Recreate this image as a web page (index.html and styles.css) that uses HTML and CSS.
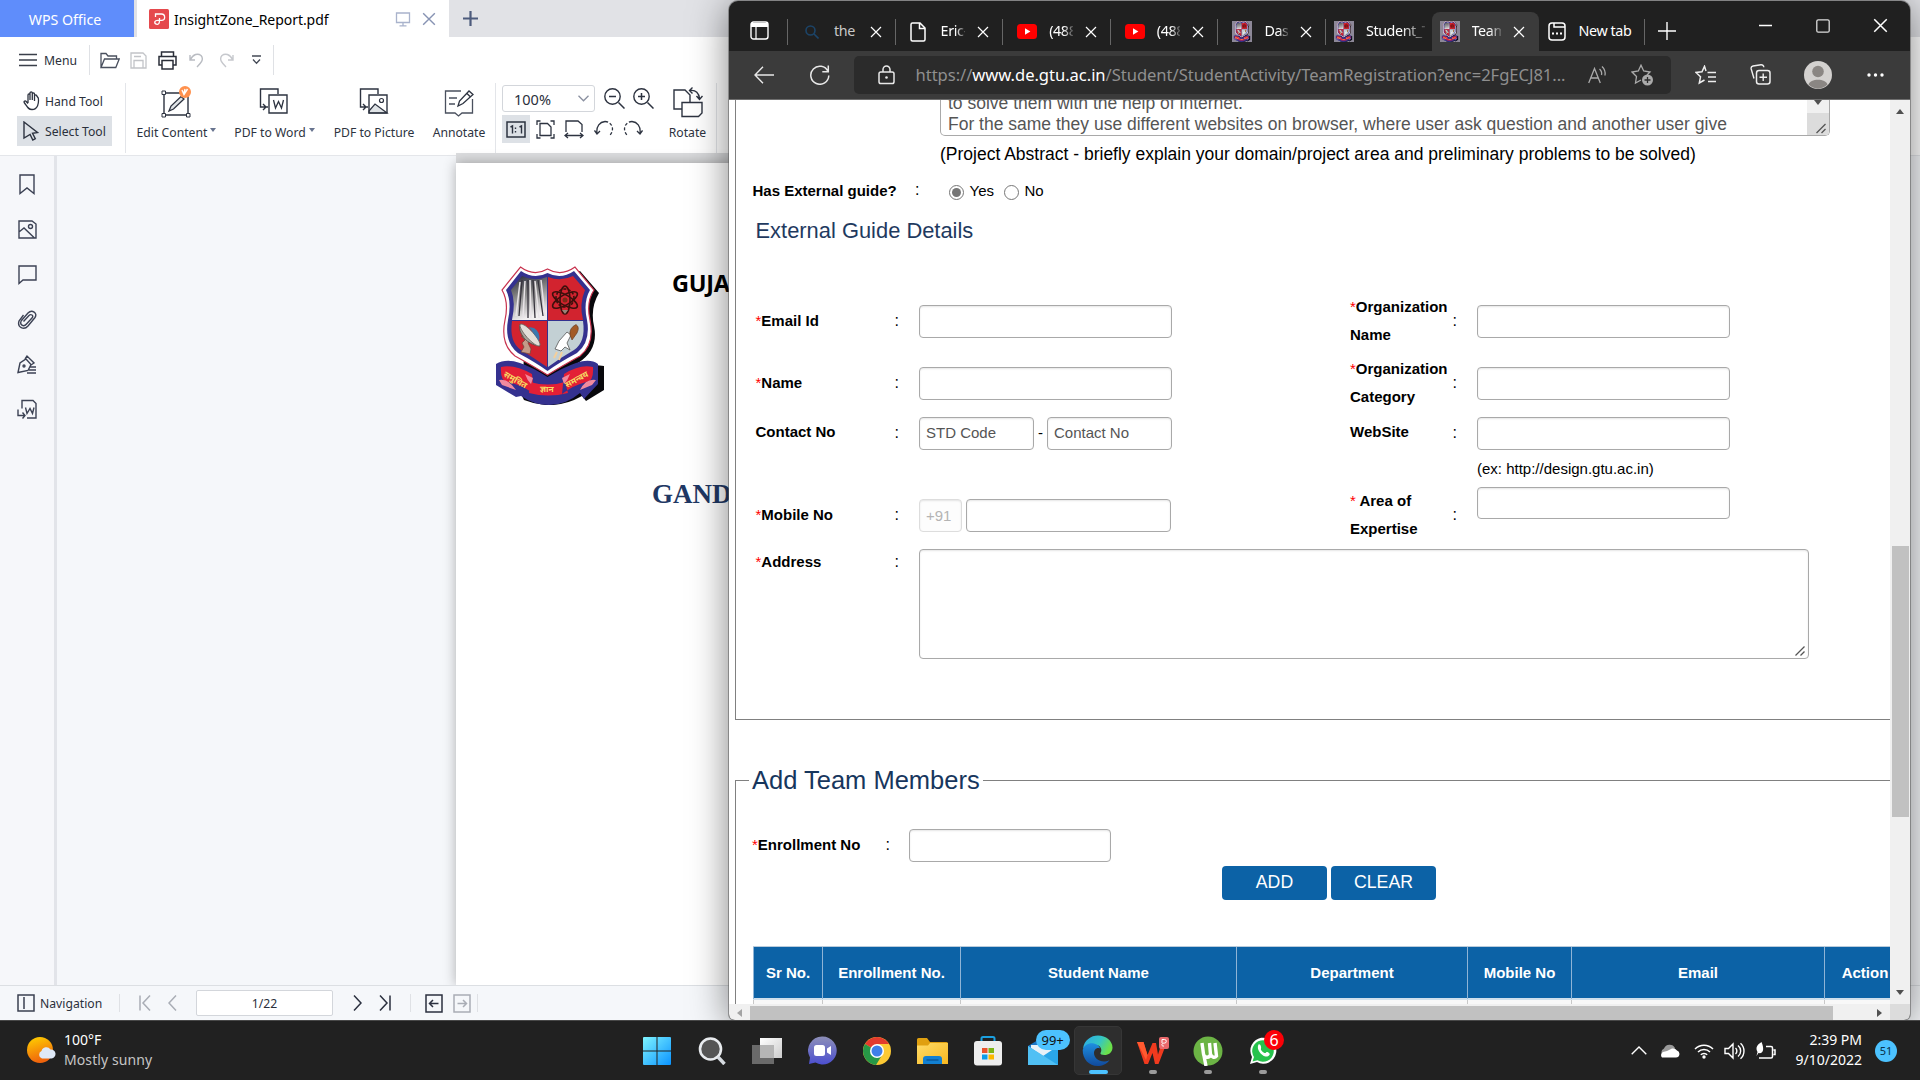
FILE: index.html
```html
<!DOCTYPE html>
<html lang="en">
<head>
<meta charset="utf-8">
<title>Team Registration</title>
<link rel="stylesheet" href="styles.css">
</head>
<body>
<svg class="defs" aria-hidden="true">
  <defs>
    <linearGradient id="win" x1="0" y1="0" x2="1" y2="1"><stop offset="0" stop-color="#7ff4ff"/><stop offset="1" stop-color="#0a93ff"/></linearGradient>
    <linearGradient id="sun" x1="0" y1="0" x2=".3" y2="1"><stop offset="0" stop-color="#ffd400"/><stop offset="1" stop-color="#f0640c"/></linearGradient>
    <linearGradient id="edgeG" x1="0" y1="0" x2="1" y2=".4"><stop offset="0" stop-color="#2aa8e8"/><stop offset=".6" stop-color="#35c6c4"/><stop offset="1" stop-color="#6be04a"/></linearGradient>
    <linearGradient id="edgeB" x1="0" y1="0" x2="0" y2="1"><stop offset="0" stop-color="#1e8fe0"/><stop offset="1" stop-color="#114a9c"/></linearGradient>
    <linearGradient id="chat" x1="0" y1="0" x2="0" y2="1"><stop offset="0" stop-color="#8d8fb8"/><stop offset="1" stop-color="#4c4fd0"/></linearGradient>
    <linearGradient id="fold" x1="0" y1="0" x2="1" y2="1"><stop offset="0" stop-color="#ffdc68"/><stop offset="1" stop-color="#f8b820"/></linearGradient>
    <linearGradient id="dam" x1="0" y1="0" x2=".3" y2="1"><stop offset="0" stop-color="#23253a"/><stop offset=".4" stop-color="#777"/><stop offset="1" stop-color="#f2eff0"/></linearGradient>
    <linearGradient id="task" x1="0" y1="0" x2="1" y2="1"><stop offset="0" stop-color="#fff"/><stop offset="1" stop-color="#ccc"/></linearGradient>
    <symbol id="crest" viewBox="0 0 108 139">
      <path d="M32 7Q42 12 54 7Q68 12 84 5L103 27Q94 42 98 60Q103 84 82 97L108 100V124L90 135L86 130Q58 146 28 134L26 130Z" fill="#08080c"/>
      <path d="M24.5 1Q38 11 51.5 3Q65 11 79 1L98 24Q90 36 94 54Q99 78 84 90Q66 100 51.5 109Q37 100 19 90Q4 78 9 54Q13 36 6 24Z" fill="#fff" stroke="#c8324e" stroke-width="1.2"/>
      <path d="M25 5Q38 14 51.5 7Q65 14 78 5L94 24Q87 36 91 54Q95 76 81 87Q64 96 51.5 105Q39 96 22 87Q8 76 12 54Q16 36 10 24Z" fill="#34318f"/>
      <path d="M26 10Q38 16 51 11V54H16Q20 36 15 24Z" fill="url(#dam)"/>
      <path d="M52 11Q65 16 77 10L89 24Q83 38 87 54H52Z" fill="#d2232f"/>
      <path d="M16 55H51V101Q38 92 25 84Q13 76 16 55Z" fill="#d2232f"/>
      <path d="M52 55H87Q90 76 78 84Q64 92 52 101Z" fill="#c3d0d4"/>
      <path d="M24 16L20 50M29 15L27 52M34 14L35 52M39 15L43 52M45 14L49 50" stroke="#e9e4e8" stroke-width="1.5" fill="none"/>
      <path d="M26 14L23 50M32 14L32 52M37 14L39 52M42 14L47 50" stroke="#37333d" stroke-width="1.3" fill="none"/>
      <g fill="none" stroke="#3d100c" stroke-width="1.6"><ellipse cx="69" cy="34" rx="14" ry="5" transform="rotate(30 69 34)"/><ellipse cx="69" cy="34" rx="14" ry="5" transform="rotate(-30 69 34)"/><ellipse cx="69" cy="34" rx="5" ry="14"/><circle cx="69" cy="32" r="9" stroke-dasharray="3 1.5"/></g>
      <circle cx="69" cy="34" r="2.5" fill="#7a2a18"/><path d="M66 44h6l-3 4z" fill="#968478"/>
      <path d="M25 70l4 4-3 3 2 4-3 5 9 2 1-5-3-6 2-4z" fill="#c49a88" stroke="#6e4438" stroke-width=".7"/>
      <path d="M24 58Q22 64 28 72Q34 79 44 80Z" fill="#a9a29a" stroke="#514a46" stroke-width=".8"/><ellipse cx="34" cy="69" rx="14.500" ry="3.800" transform="rotate(48 34 69)" fill="#e3ded8" stroke="#6b635d" stroke-width=".8"/><path d="M33 61L43 75Q45 66 38 62Z" fill="#3a78ae"/>
      <path d="M59 83L63 75L71 66L75 69L71 77L74 84L69 81L65 85Z" fill="#fff" stroke="#555" stroke-width=".8"/><path d="M74 69Q73 62 80 58.500Q84 61 81 67L76 74Z" fill="#a35b26" stroke="#5c351c" stroke-width=".6"/><path d="M61 86l-3 6M66 86l-3 8" stroke="#f5cf9a" stroke-width="2"/>
      <path d="M0 98Q10 92 24 97Q36 101 51.5 111Q68 101 80 97Q94 92 102 98V118L88 133L84 127Q70 139 53 139Q38 139 25 130L20 131L0 119Z" fill="#34318f"/>
      <path d="M5 101Q18 98 36 108L38 128Q26 119 12 116Q4 116 5 101ZM97 101Q84 98 68 108L66 128Q78 119 90 116Q98 116 97 101ZM34 116Q52 121 69 116L72 127Q52 132 33 127Z" fill="#e31f36"/>
      <path d="M3 114Q12 112 20 124L6 119ZM100 114Q90 112 84 124L96 119ZM29 108L37 112L35 118Q31 114 29 108ZM74 108L66 112L68 118Q72 114 74 108Z" fill="#f08b9f"/>
      <g class="crest-text" fill="#f6dc64"><text x="7" y="110" transform="rotate(30 7 110)">समुचित</text><text x="44" y="125.500">ज्ञान</text><text x="71" y="122" transform="rotate(-29 71 122)">समन्वय</text></g>
    </symbol>
    <symbol id="yt" viewBox="0 0 20 15"><rect width="20" height="15" rx="3.5" fill="#f00"/><path d="M8 4.2v6.6L13.4 7.5z" fill="#fff"/></symbol>
    <symbol id="x" viewBox="0 0 12 12"><path d="M1 1l10 10M11 1L1 11" fill="none" stroke="currentColor" stroke-width="1.2"/></symbol>
    <symbol id="grip" viewBox="0 0 10 10"><path d="M.5 9.5l9-9M5.5 9.5l4-4" fill="none" stroke="#555" stroke-width="1.3"/></symbol>
    <symbol id="pages" viewBox="0 0 30 30"><path d="M9 20H6L1.500 20V2H19V7M1.500 20l5 0M4 17l3 3-3 3M10 8h18v18H10z" fill="none" stroke="currentColor" stroke-width="1.4"/></symbol>
  </defs>
</svg>

<div class="desktop">
  <section class="wps">
    <div class="wps-tabs">
      <div class="wps-home">WPS Office</div>
      <div class="wps-doc">
        <svg width="20" height="20" viewBox="0 0 20 20"><rect width="20" height="20" rx="1.500" fill="#e5494d"/><path d="M6.500 8V5H12.500a3 3 0 0 1 0 6.300H9c-4.500 0-4 4-.5 4 2 0 2-1.500 2-4V9" fill="none" stroke="#fff" stroke-width="1.300"/></svg>
        <span>InsightZone_Report.pdf</span>
        <svg class="push" width="16" height="15" viewBox="0 0 16 15"><path d="M1.500 1h13v9.500h-13zM8 10.500V13.500M4.500 13.800h7" fill="none" stroke="#a9b3cc" stroke-width="1.300"/></svg>
        <svg class="doc-x" width="14" height="14"><use href="#x"/></svg>
      </div>
      <svg class="plus" width="15" height="15" viewBox="0 0 15 15"><path d="M7.500 0v15M0 7.500h15" stroke="#4d5b7c" stroke-width="2.200"/></svg>
    </div>

    <div class="wps-menu">
      <svg width="18" height="14" viewBox="0 0 18 14"><path d="M0 1.500h18M0 7h18M0 12.500h18" stroke="#3a3f4a" stroke-width="1.300"/></svg>
      <span>Menu</span>
      <i class="sep"></i>
      <svg width="20" height="17" viewBox="0 0 20 17"><path d="M1 15.500V1.500h5l2 2.500h8.500v3M1 15.500L4.500 7h14.700L15.800 15.500z" fill="none" stroke="#4a505e" stroke-width="1.300"/></svg>
      <svg width="17" height="17" viewBox="0 0 17 17"><path d="M1 1h12l3 3v12H1zM4 16V8.500h9V16M4 4.500h7" fill="none" stroke="#c2c4c8" stroke-width="1.300"/></svg>
      <svg width="19" height="19" viewBox="0 0 19 19"><path d="M3.500 5V1h12v4M4 14H1V5.500h17V14h-3M4 9.500h11v8.500H4z" fill="none" stroke="#2a2e38" stroke-width="1.500"/></svg>
      <svg width="15" height="16" viewBox="0 0 15 16"><path d="M1 3v5h5M1.500 7.500C4 2 9 1 12 3.500c3.500 4-.5 8-4 11.500" fill="none" stroke="#b9bcc2" stroke-width="1.400"/></svg>
      <svg width="15" height="16" viewBox="0 0 15 16"><path d="M14 3v5H9M13.500 7.500C11 2 6 1 3 3.500c-3.500 4 .5 8 4 11.500" fill="none" stroke="#c6c8cd" stroke-width="1.400"/></svg>
      <svg width="9" height="10" viewBox="0 0 9 10"><path d="M0 1h9M1 4.500l3.500 3.800L8 4.500" fill="none" stroke="#444a56" stroke-width="1.300"/></svg>
      <i class="sep"></i>
    </div>

    <div class="wps-ribbon">
      <div class="tool-pair">
        <div class="tool"><svg width="18" height="20" viewBox="0 0 18 20"><path d="M5 12V4c0-1.500 2-1.500 2 0v5-7c0-1.500 2.300-1.500 2.300 0v7V3c0-1.500 2.200-1.500 2.200 0v7V5c0-1.400 2.300-1.400 2.300 0l1.500 2c.7 5-.5 11.500-6.300 11.500C5 18.500 4.500 16 1.200 11.500.6 10 2.400 9.500 3 10.300L5 12.500" fill="none" stroke="#2d3340" stroke-width="1.300"/></svg><span>Hand Tool</span></div>
        <div class="tool on"><svg width="16" height="20" viewBox="0 0 16 20"><path d="M1 1l13.500 10.500-5 .8 2.800 5.500-2.500 1.200-2.700-5.500L1 17z" fill="none" stroke="#2d3340" stroke-width="1.400"/></svg><span>Select Tool</span></div>
      </div>
      <div class="big w-edit"><svg width="30" height="32" viewBox="0 0 30 32"><path d="M3 7h24v22H3z" fill="none" stroke="#2d3340" stroke-width="1.400"/><path d="M1 5h3.500v3.500H1zM1 27.500h3.500V31H1zM25.500 27.500H29V31h-3.500z" fill="#fff" stroke="#2d3340"/><path d="M8 25l2-5L20 10.500l3 2.500L12.500 23z" fill="#dfe3e6" stroke="#2d3340" stroke-width="1.300"/><circle cx="24" cy="6" r="6" fill="#ff914d"/><path d="M21 4l2 4.500 3.500-5.500M24 3l-1 5" fill="none" stroke="#fff" stroke-width="1.400"/></svg><span>Edit Content<b></b></span></div>
      <div class="big w-word"><svg width="30" height="32" viewBox="0 0 30 30"><use href="#pages"/><path d="M14.500 13l2 8 3-6.500 3 6.500 2-8" fill="none" stroke="#2d3340" stroke-width="1.300"/></svg><span>PDF to Word<b></b></span></div>
      <div class="big w-pic"><svg width="30" height="32" viewBox="0 0 30 30"><path d="M10 24l6-7 12 9H10z" fill="#dfe3e6" stroke="#2d3340" stroke-width="1.200"/><use href="#pages"/><circle cx="22.500" cy="13.500" r="2" fill="none" stroke="#2d3340" stroke-width="1.200"/></svg><span>PDF to Picture</span></div>
      <div class="big w-ann"><svg width="30" height="32" viewBox="0 0 30 32"><path d="M17 5H1.500v22H11l3.500 3 3.500-3h10.500V13M5 12h8M5 18h6" fill="none" stroke="#4a505e" stroke-width="1.300"/><path d="M14 20l1.500-5L25 5l4 3.500-10 9z M23 7.500l3.500 3.500" fill="#fff" stroke="#2d3340" stroke-width="1.300"/></svg><span>Annotate</span></div>
      <div class="zoombox">
        <div class="zoomrow">
          <div class="zoomsel"><span>100%</span><svg width="11" height="7" viewBox="0 0 11 7"><path d="M.5.800l5 5 5-5" fill="none" stroke="#8a90a0" stroke-width="1.300"/></svg></div>
          <svg width="21" height="21" viewBox="0 0 21 21"><path d="M14.500 14.500l6 6M5 8.500h7" stroke="#2d3340" stroke-width="1.500"/><circle cx="8.500" cy="8.500" r="7.700" fill="none" stroke="#2d3340" stroke-width="1.400"/></svg>
          <svg width="21" height="21" viewBox="0 0 21 21"><path d="M14.500 14.500l6 6M5 8.500h7M8.500 5v7" stroke="#2d3340" stroke-width="1.500"/><circle cx="8.500" cy="8.500" r="7.700" fill="none" stroke="#2d3340" stroke-width="1.400"/></svg>
        </div>
        <div class="fitrow">
          <div class="fit on"><svg width="20" height="17" viewBox="0 0 20 17"><path d="M1 1h18v15H1z" fill="none" stroke="#2d3340" stroke-width="1.500"/><path d="M4.500 6l2-1v7.500M13.500 6l2-1v7.500M9.500 6.500v1.500M9.500 10v1.500" fill="none" stroke="#2d3340" stroke-width="1.400"/></svg></div>
          <div class="fit"><svg width="19" height="19" viewBox="0 0 19 19"><path d="M4 3.500h7.500l3.500 3.500v8.500H4zM4.500 1H1v4M14.500 1H18v4M1 14v4h3.500M18 14v4h-3.500" fill="none" stroke="#2d3340" stroke-width="1.300"/></svg></div>
          <div class="fit"><svg width="20" height="19" viewBox="0 0 20 19"><path d="M2 12V1h12l4 3.500V12M1 15.500h18M4 13l-3 2.500 3 2.500M16 13l3 2.500-3 2.500" fill="none" stroke="#2d3340" stroke-width="1.300"/></svg></div>
          <div class="fit"><svg width="20" height="18" viewBox="0 0 20 18"><path d="M3 13.500C2 6 6 2 11 1.500M.5 10.500L3 14l3-3" fill="none" stroke="#2d3340" stroke-width="1.300"/><path d="M11 1.500C19 2 21 11 15 16" fill="none" stroke="#2d3340" stroke-width="1.300" stroke-dasharray="3 2"/></svg></div>
          <div class="fit"><svg width="20" height="18" viewBox="0 0 20 18"><path d="M17 13.500C18 6 14 2 9 1.500M19.500 10.500L17 14l-3-3" fill="none" stroke="#2d3340" stroke-width="1.300"/><path d="M9 1.500C1 2-1 11 5 16" fill="none" stroke="#2d3340" stroke-width="1.300" stroke-dasharray="3 2"/></svg></div>
        </div>
      </div>
      <div class="big w-rot"><svg width="30" height="32" viewBox="0 0 30 32"><path d="M8.500 23H1V4h11l5 5v7M9 16.500h20V27l-3.500 3.500H9z" fill="none" stroke="#2d3340" stroke-width="1.400"/><path d="M17 4.500c6-1 9 3 9.500 8M19.500 1.500l-3 3 3 3M23.500 10l3 3.500 3-3.500" fill="none" stroke="#2d3340" stroke-width="1.400"/></svg><span>Rotate</span></div>
    </div>

    <div class="wps-body">
      <nav class="side">
        <svg width="16" height="21" viewBox="0 0 16 21"><path d="M1 1h14v18.500l-7-5.500-7 5.500z"/></svg>
        <svg width="19" height="19" viewBox="0 0 19 19"><path d="M1 1h13l4 3v14H1zM1 12l5-4 10.500 10"/><circle cx="12.500" cy="6.500" r="2"/></svg>
        <svg width="19" height="19" viewBox="0 0 19 19"><path d="M1 1h17v14H5l-4 3.500z"/></svg>
        <svg width="20" height="19" viewBox="0 0 20 19"><path d="M6.500 11.500l5.500-6c2-2 4.800 0 3.200 2.300L9.500 14c-3 3.500-7.500.5-5-3.500l6.500-7.500c4-4 10 0 7 4.500l-7 8.500c-4 4.500-11 1.500-9-5L6.500 5"/></svg>
        <svg width="20" height="19" viewBox="0 0 20 19"><path d="M1 17.500L3 8l6-4 5 5.500-3 6zM8 4l2-3 7 7-3 2M13 12h6M12 15h7M10 18h9"/><circle cx="7" cy="11" r="1"/></svg>
        <svg width="20" height="20" viewBox="0 0 20 20"><path d="M5 9V1h11l3 3v14.500H10M8.500 8l1.500 6 3-5 2.500 5L17 8M1 10v6h7M5.500 13L8 16l-2.500 3"/></svg>
      </nav>
      <div class="doc">
        <div class="sheet">
          <svg class="sheet-crest" width="108" height="139"><use href="#crest"/></svg>
          <div class="sheet-text"><p class="uni">GUJARAT</p><p class="city">GANDHINAGAR</p></div>
        </div>
      </div>
    </div>

    <div class="wps-status">
      <svg width="18" height="18" viewBox="0 0 18 18"><path d="M1 1h16v16H1zM7 3v12" fill="none" stroke="#3a4050" stroke-width="1.500"/></svg>
      <span>Navigation</span>
      <i class="sep"></i>
      <svg class="dim" width="12" height="16" viewBox="0 0 12 16"><path d="M1 .5v15M11 .5L4 8l7 7.500"/></svg>
      <svg class="dim" width="9" height="16" viewBox="0 0 9 16"><path d="M8 .5L1 8l7 7.500"/></svg>
      <div class="pageno">1/22</div>
      <svg width="9" height="16" viewBox="0 0 9 16"><path d="M1 .5L8 8l-7 7.500"/></svg>
      <svg width="12" height="16" viewBox="0 0 12 16"><path d="M11 .5v15M1 .5L8 8l-7 7.500"/></svg>
      <i class="sep"></i>
      <svg width="18" height="19" viewBox="0 0 18 19"><path d="M1 1h16v17H1zM4.500 9.500h9M8 6L4.500 9.500 8 13"/></svg>
      <svg class="dim" width="18" height="19" viewBox="0 0 18 19"><path d="M1 1h16v17H1zM4.500 9.500h9M10 6l3.500 3.500L10 13"/></svg>
      <i class="sep"></i>
    </div>
  </section>

  <section class="edge">
    <div class="tabs">
      <svg class="tabact" width="19" height="19" viewBox="0 0 19 19"><rect x="1" y="1" width="17" height="17" rx="2.500" fill="none" stroke="#fff" stroke-width="1.400"/><path d="M1 2h17v4H1z" fill="#fff"/><path d="M6 6v12" stroke="#fff" stroke-width="1.200"/></svg>
      <div class="tab"><svg class="fav" width="14" height="14" viewBox="0 0 14 14"><circle cx="5.500" cy="5.500" r="4.500" fill="none" stroke="#1c4468" stroke-width="1.600"/><path d="M9 9l4.500 4.500" stroke="#1c4468" stroke-width="1.600"/></svg><span class="grey">the</span><svg class="tx" width="12" height="12"><use href="#x"/></svg></div>
      <div class="tab"><svg class="fav" width="16" height="20" viewBox="0 0 16 20"><path d="M1 2.500A1.500 1.500 0 0 1 2.500 1H10l5 5v11.500a1.500 1.500 0 0 1-1.500 1.500h-11A1.500 1.500 0 0 1 1 17.500zM9.500 1v5.500H15" fill="none" stroke="#fff" stroke-width="1.500"/></svg><span class="fade">Eric-</span><svg class="tx" width="12" height="12"><use href="#x"/></svg></div>
      <div class="tab"><svg class="fav" width="20" height="15"><use href="#yt"/></svg><span class="fade">(488</span><svg class="tx" width="12" height="12"><use href="#x"/></svg></div>
      <div class="tab"><svg class="fav" width="20" height="15"><use href="#yt"/></svg><span class="fade">(488</span><svg class="tx" width="12" height="12"><use href="#x"/></svg></div>
      <div class="tab"><svg class="fav" width="20" height="21"><rect width="20" height="21" fill="#8d8898"/><use href="#crest"/></svg><span class="fade">Dash</span><svg class="tx" width="12" height="12"><use href="#x"/></svg></div>
      <div class="tab student"><svg class="fav" width="20" height="21"><rect width="20" height="21" fill="#8d8898"/><use href="#crest"/></svg><span class="fade wide">Student_T</span></div>
      <div class="tab active"><svg class="fav" width="20" height="21"><rect width="20" height="21" fill="#8d8898"/><use href="#crest"/></svg><span class="fade">Team</span><svg class="tx" width="12" height="12"><use href="#x"/></svg></div>
      <div class="tab last"><svg class="fav" width="18" height="19" viewBox="0 0 18 19"><rect x="1" y="1" width="16" height="17" rx="3" fill="none" stroke="#fff" stroke-width="1.500"/><path d="M6 1v4h11" fill="none" stroke="#fff" stroke-width="1.500"/><path d="M4 11.500h2M8 11.500h2M12 11.500h2" stroke="#fff" stroke-width="2"/></svg><span class="wide">New tab</span></div>
      <svg class="newtab" width="18" height="18" viewBox="0 0 18 18"><path d="M9 0v18M0 9h18" stroke="#fff" stroke-width="1.400"/></svg>
      <div class="winctl">
        <svg width="13" height="13" viewBox="0 0 13 13"><path d="M0 6.500h13" stroke="#fff" stroke-width="1.300"/></svg>
        <svg width="14" height="14" viewBox="0 0 14 14"><rect x=".8" y=".8" width="12.400" height="12.400" rx="1.500" fill="none" stroke="#ddd" stroke-width="1.300"/></svg>
        <svg width="15" height="15"><use href="#x"/></svg>
      </div>
    </div>

    <div class="addr">
      <svg width="20" height="18" viewBox="0 0 20 18"><path d="M20 9H1M9 .7L1 9l8 8.300" fill="none" stroke="#e8e8e8" stroke-width="1.400"/></svg>
      <svg width="21" height="21" viewBox="0 0 21 21"><path d="M19 7.500a9 9 0 1 0 .8 4M19.300 1.500v6.200h-6" fill="none" stroke="#e8e8e8" stroke-width="1.500"/></svg>
      <div class="pill">
        <svg width="17" height="20" viewBox="0 0 17 20"><rect x="1" y="7" width="15" height="11.500" rx="1.800" fill="none" stroke="#e8e8e8" stroke-width="1.500"/><path d="M5 7V4.500a3.500 3.500 0 0 1 7 0V7" fill="none" stroke="#e8e8e8" stroke-width="1.500"/><circle cx="8.500" cy="12.500" r="1.300" fill="#e8e8e8"/></svg>
        <span class="url">https://<em>www.de.gtu.ac.in</em>/Student/StudentActivity/TeamRegistration?enc=2FgECJ81...</span>
        <svg class="aloud" width="19" height="18" viewBox="0 0 19 18"><path d="M.7 17L6.500 2.500 12.300 17M2.800 12h7.400M11.500 3a6 6 0 0 1 2 6M14 .5a10 10 0 0 1 3 9" fill="none" stroke="#aaa" stroke-width="1.300"/></svg>
        <svg class="addfav" width="23" height="22" viewBox="0 0 23 22"><path d="M10 16l-5.500 3 1-6.500L1 8l6.300-1L10 1.200 12.700 7l6.300 1-3 3" fill="none" stroke="#aaa" stroke-width="1.300"/><circle cx="16.500" cy="16" r="5.500" fill="#aaa"/><path d="M16.500 13v6M13.500 16h6" stroke="#2b2b2b" stroke-width="1.300"/></svg>
      </div>
      <svg width="22" height="20" viewBox="0 0 22 20"><path d="M11 6L9.500 1.300 7 6.800l-6 .7 4.500 4.300L4.300 18l5.200-3M12.500 7.500H21M13 12h8M13 16.500h8" fill="none" stroke="#eee" stroke-width="1.500"/></svg>
      <svg width="21" height="21" viewBox="0 0 21 21"><rect x="6.500" y="6.500" width="13.500" height="13.500" rx="2.500" fill="none" stroke="#eee" stroke-width="1.500"/><path d="M13.200 9.500v7.500M9.500 13.200H17M4 14.500L1.200 5A2.500 2.500 0 0 1 3 2l8-1.200a2.500 2.500 0 0 1 2.800 2.400" fill="none" stroke="#eee" stroke-width="1.400"/></svg>
      <svg width="28" height="28" viewBox="0 0 28 28"><circle cx="14" cy="14" r="14" fill="#d3d1cf"/><circle cx="14" cy="10.500" r="5.800" fill="#8a8683"/><path d="M4.500 23.500C6 17 22 17 23.500 23.500 18 29 10 29 4.500 23.500z" fill="#8a8683"/></svg>
      <svg width="17" height="4" viewBox="0 0 17 4"><circle cx="2" cy="2" r="1.700" fill="#fff"/><circle cx="8.500" cy="2" r="1.700" fill="#fff"/><circle cx="15" cy="2" r="1.700" fill="#fff"/></svg>
    </div>

    <div class="view">
      <main class="page">
        <div class="guide">
          <div class="abstract">
            <p>to solve them with the help of internet.<br>For the same they use different websites on browser, where user ask question and another user give</p>
            <div class="mini"><i class="tri down"></i><div class="corner"><svg width="10" height="11"><use href="#grip"/></svg></div></div>
          </div>
          <p class="note">(Project Abstract - briefly explain your domain/project area and preliminary problems to be solved)</p>
          <div class="has"><b>Has External guide?</b><b class="c">:</b><i class="radio on"></i><span>Yes</span><i class="radio"></i><span>No</span></div>
          <h2>External Guide Details</h2>
          <div class="form">
            <label><s>*</s>Email Id</label><b class="c">:</b><div><input class="w253"></div>
            <label><s>*</s>Organization<br>Name</label><b class="c">:</b><div><input class="w253"></div>
            <label><s>*</s>Name</label><b class="c">:</b><div><input class="w253"></div>
            <label><s>*</s>Organization<br>Category</label><b class="c">:</b><div><input class="w253"></div>
            <label>Contact No</label><b class="c">:</b><div class="phone"><input class="w115" value="STD Code"><span>-</span><input class="w125" value="Contact No"></div>
            <label>WebSite</label><b class="c">:</b><div class="phone"><input class="w253"></div>
            <p class="ex">(ex: http://design.gtu.ac.in)</p>
            <label><s>*</s>Mobile No</label><b class="c">:</b><div class="mobile"><input class="w43" value="+91" disabled><input class="w205"></div>
            <label><s>*</s> Area of<br>Expertise</label><b class="c">:</b><div class="area"><input class="w253"></div>
            <label class="al"><s>*</s>Address</label><b class="c al">:</b><div class="address"><svg width="10" height="10"><use href="#grip"/></svg></div>
          </div>
        </div>
        <fieldset class="team">
          <legend>Add Team Members</legend>
          <div class="enrol"><label><s>*</s>Enrollment No</label><b class="c">:</b><input></div>
          <div class="btns"><button>ADD</button><button>CLEAR</button></div>
          <div class="thead"><div>Sr No.</div><div>Enrollment No.</div><div>Student Name</div><div>Department</div><div>Mobile No</div><div>Email</div><div>Action</div></div>
          <div class="trow"><i></i><i></i><i></i><i></i><i></i><i></i><i></i></div>
        </fieldset>
      </main>
      <div class="vbar"><i class="tri up"></i><div class="vthumb"></div><i class="tri down"></i></div>
      <div class="hbar"><i class="tri left"></i><div class="hthumb"></div><i class="tri right"></i></div>
      <div class="cornerbox"></div>
    </div>
  </section>

  <footer class="taskbar">
    <div class="weather">
      <svg width="29" height="28" viewBox="0 0 29 28"><circle cx="13" cy="13" r="13" fill="url(#sun)"/><path d="M15 21.500a4 4 0 0 1-.5-7.500 5 5 0 0 1 9-1.500 4.500 4.500 0 0 1 1 9z" fill="#dfe9f8"/></svg>
      <p>100°F<br><span>Mostly sunny</span></p>
    </div>
    <div class="apps">
      <div><svg width="30" height="30" viewBox="0 0 30 30"><path d="M1 2a1 1 0 0 1 1-1h12.500v13.500H1zM15.500 1H28a1 1 0 0 1 1 1v12.500H15.500zM1 15.500h13.500V29H2a1 1 0 0 1-1-1zM15.500 15.500H29V28a1 1 0 0 1-1 1H15.500z" fill="url(#win)"/></svg></div>
      <div><svg width="28" height="28" viewBox="0 0 28 28"><circle cx="12.500" cy="12" r="10.500" fill="#555" stroke="#e8ebee" stroke-width="2.600"/><path d="M20 20l6.500 7" stroke="#d6dbe0" stroke-width="3.500"/></svg></div>
      <div><svg width="30" height="28" viewBox="0 0 30 28"><path d="M8 1h22v20H8z" fill="url(#task)"/><path d="M0 8h22v19H0z" fill="#6a6a6a"/><path d="M8 8h14v13H8z" fill="#b5b5b5"/></svg></div>
      <div><svg width="29" height="29" viewBox="0 0 29 29"><path d="M14.500.5a14 14 0 1 1-7 26L1 28l1-6.500A14 14 0 0 1 14.500.5z" fill="url(#chat)"/><rect x="6" y="9" width="11" height="11" rx="2.500" fill="#fff"/><path d="M19 12.500L23 10v9l-4-2.500z" fill="#fff"/></svg></div>
      <div><svg width="28" height="28" viewBox="0 0 28 28"><circle cx="14" cy="14" r="14" fill="#fcc934"/><path d="M14 14L1.900 7A14 14 0 0 1 26.100 7H14z" fill="#e33b2e"/><path d="M1.900 7A14 14 0 0 0 13 28l7-11.500-6-2.500z" fill="#279847"/><circle cx="14" cy="14" r="7" fill="#fff"/><circle cx="14" cy="14" r="5.500" fill="#3f7fe8"/></svg></div>
      <div><svg width="31" height="28" viewBox="0 0 31 28"><path d="M0 2.500A1.500 1.500 0 0 1 1.500 1H10l3 4h16.500A1.500 1.500 0 0 1 31 6.500V27H0z" fill="#e0a010"/><path d="M0 8.500h11L13 6h18v21H0z" fill="url(#fold)"/><path d="M6 27v-5a3 3 0 0 1 3-3h13a3 3 0 0 1 3 3v5z" fill="#1280d2"/><path d="M9.500 23h12" stroke="#0b5a9c" stroke-width="1.500"/></svg></div>
      <div><svg width="30" height="30" viewBox="0 0 30 30"><path d="M8.500 6V2.500A1.500 1.500 0 0 1 10 1h10a1.500 1.500 0 0 1 1.500 1.500V6" fill="none" stroke="#1ba0e0" stroke-width="2"/><rect x="1" y="5" width="28" height="24.500" rx="3" fill="#eee"/><path d="M9 12h5.500v5H9z" fill="#e9532c"/><path d="M15.500 12H21v5h-5.500z" fill="#7cb518"/><path d="M9 18.500h5.500v5H9z" fill="#0b9ce8"/><path d="M15.500 18.500H21v5h-5.500z" fill="#fbb800"/></svg></div>
      <div class="mail"><svg width="30" height="30" viewBox="0 0 30 30"><path d="M0 10L15 1l15 9v19H0z" fill="#1b75c4"/><path d="M3 9h24v8L15 22 3 17z" fill="#e8f1f8"/><path d="M0 10l15 10 15-10v19H0z" fill="#2aa6e8"/><path d="M0 10l30 19H0z" fill="#50c0f4"/></svg><span class="badge blue">99+</span></div>
      <div class="cur"><svg width="31" height="31" viewBox="0 0 31 31"><path d="M1 14C2 5 9 .5 16 .5c8 0 14.500 5.500 14.500 12 0 5-4 7.500-8 7.500-3 0-4.500-1-4-2 2-3 .5-8-5-8S2 11 1 14z" fill="url(#edgeG)"/><path d="M.7 15C2 10 7 7.500 12 8.500c3 .5 5.500 2.500 6 5-3-1.500-6 1-6 4.500 0 5 5 9 11 8.500 2 0 3.500-1 4.500-1.500C25 29 20 31 15.500 31 7 31 .5 24 .7 15z" fill="url(#edgeB)"/></svg><u></u></div>
      <div class="run"><svg width="34" height="30" viewBox="0 0 34 30"><path d="M1 6h6.500l4 13 5-12H20l2 11.500L26 6h5l-8.500 22h-3.500L16.500 17 12 28H8.500z" fill="#f03a1e"/><path d="M1 6h6.500l4 13-1.500 5z" fill="#ff5a30"/><rect x="23" y="1" width="10" height="12" rx="2" fill="#e9696c"/><path d="M26 7V3.500h2.500a1.800 1.800 0 0 1 0 3.600C25 7 25 10.500 28 10" fill="none" stroke="#fff"/></svg><u></u></div>
      <div class="run"><svg width="30" height="30" viewBox="0 0 30 30"><circle cx="15" cy="15" r="14.500" fill="#6cb445"/><path d="M9 7l1.500 11c.5 4 6 4.500 7 .5L16.500 7M17.500 18c1.500 4 4.500 4 6 2L22 7M11 20l2 10" fill="none" stroke="#fff" stroke-width="3.400"/></svg><u></u></div>
      <div class="run"><svg width="28" height="28" viewBox="0 0 28 28"><path d="M1 27l2-7A13 13 0 1 1 8 25z" fill="#fff"/><path d="M3.500 24.500L5 20A10.800 10.800 0 1 1 8.500 23.300z" fill="#27c24c"/><path d="M9.500 7.500c2-1 3 3 2.500 4-1 1.500 3 5 4.500 4.500 1-1 1.500-2 4 .5 1 1-1 3.500-4 3C12 18.500 7 12 9.500 7.500z" fill="#fff"/></svg><span class="badge red">6</span><u></u></div>
    </div>
    <div class="tray">
      <svg width="16" height="9" viewBox="0 0 16 9"><path d="M.7 8.300L8 1l7.300 7.300" fill="none" stroke="#fff" stroke-width="1.400"/></svg>
      <svg width="21" height="14" viewBox="0 0 21 14"><path d="M5 12a4 4 0 0 1 0-7.500A6 6 0 0 1 16 4l-3 8z" fill="#9a9a9a"/><path d="M3 13.500a3.500 3.500 0 0 1 1-5.500l4-1 5-2.500a5 5 0 0 1 5 2 3.600 3.600 0 0 1-1 7z" fill="#fff"/></svg>
      <svg width="20" height="16" viewBox="0 0 20 16"><path d="M1 6a12.500 12.500 0 0 1 18 0M4 9a8.300 8.300 0 0 1 12 0M6.800 11.800a4.500 4.500 0 0 1 6.400 0" fill="none" stroke="#fff" stroke-width="1.500"/><circle cx="10" cy="14" r="1.700" fill="#fff"/></svg>
      <svg width="21" height="18" viewBox="0 0 21 18"><path d="M1 6.500h3.500L9 2v14l-4.500-4.500H1zM11.500 6a4 4 0 0 1 0 6M14 3.500a7 7 0 0 1 0 11M16.500 1.200a10.500 10.500 0 0 1 0 15.600" fill="none" stroke="#fff" stroke-width="1.400"/></svg>
      <svg width="21" height="18" viewBox="0 0 21 18"><path d="M11 4.500h5A1.500 1.500 0 0 1 17.500 6v8.500A1.500 1.500 0 0 1 16 16H4M18.500 8H20v4.500h-1.500" fill="none" stroke="#fff" stroke-width="1.500"/><path d="M6.500 0c-5 3-6 6-4 10l-1 4 2-3c5 1 6-4 3-11z" fill="#fff"/></svg>
      <p>2:39 PM<br>9/10/2022</p>
      <span class="count">51</span>
    </div>
  </footer>
</div>
</body>
</html>
```
FILE: styles.css
```css
* { box-sizing: border-box; }
body { margin: 0; overflow: hidden; font-family: "Noto Sans", "Open Sans", sans-serif; }
p, h2 { margin: 0; }
svg { display: block; flex: none; }
s, em, i { text-decoration: none; font-style: normal; }
.defs { position: absolute; width: 0; height: 0; }
.desktop { position: relative; width: 1920px; height: 1080px; display: flex; flex-direction: column; background: #202020; overflow: hidden; }

/* PDF reader window */
.wps { height: 1020px; flex: none; display: flex; flex-direction: column; background: #fff; color: #2b303b; font-size: 12.2px; overflow: hidden; white-space: nowrap; }
.wps-tabs { height: 37px; flex: none; display: flex; align-items: center; background: #e1e2e6; }
.wps-home { width: 134px; height: 37px; line-height: 39px; text-align: center; background: #5f8dfb; color: #fff; font-size: 14.2px; margin-right: 3px; padding-right: 4px; }
.wps-doc { width: 312px; height: 37px; display: flex; align-items: center; background: #fff; padding: 0 13px 0 12px; color: #000; font-size: 14px; }
.wps-doc span { margin: 1px 0 0 5px; letter-spacing: -.05px; }
.wps-doc .push { margin: 2px 11px 0 auto; }
.doc-x { color: #8793b3; }
.plus { margin-left: 14px; }
.sep { width: 1px; background: #dfe1e5; align-self: stretch; }
.wps-menu { height: 46px; flex: none; padding: 8px 0 8px 19px; display: grid; grid-template-columns: 25px 45px 11px 30px 28px 31px 30px 33px 21px 1px; align-items: center; }
.wps-menu .sep { height: 30px; }
.wps-ribbon { height: 72px; flex: none; display: flex; }
.wps-ribbon > * { flex: none; }
.tool-pair { width: 126px; padding: 3px 0 0 17px; border-right: 1px solid #e3e5e9; height: 70px; display: flex; flex-direction: column; gap: 1px; }
.tool { width: 95px; height: 29px; display: flex; align-items: center; padding-left: 6px; }
.tool span { width: 67px; margin: 1px 0 0 auto; }
.tool.on { background: #dde1e6; height: 30px; }
.big { display: flex; flex-direction: column; align-items: center; padding-top: 3px; color: #2d3340; }
.big svg { height: 32px; }
.big span { line-height: 18px; margin-top: 6px; position: relative; }
.big b { position: absolute; right: -9px; top: 4px; border: 3.500px solid transparent; border-top: 4px solid #68748f; border-bottom: 0; }
.w-edit { margin-left: 9px; width: 82px; padding-right: 8px; }
.w-edit svg { margin-left: 8px; }
.w-word { margin-left: 9px; width: 88px; }
.w-word svg { margin-left: 8px; }
.w-pic { margin-left: 11px; width: 98px; }
.w-ann { margin-left: 4px; width: 64px; height: 70px; }
.zoombox { margin-left: 4px; width: 164px; height: 70px; padding: 2px 0 0 6px; border-left: 1px solid #e3e5e9; display: flex; flex-direction: column; gap: 3px; }
.zoomrow { display: flex; align-items: center; gap: 8.500px; height: 27px; }
.zoomsel { width: 93px; height: 27px; border: 1px solid #d3d6db; border-radius: 3px; display: flex; align-items: center; justify-content: space-between; padding: 0 5px 0 11px; font-size: 14.500px; }
.fitrow { display: flex; gap: 1.200px; }
.fit { width: 28px; height: 28px; display: grid; place-items: center; }
.fit.on { background: #dde1e6; }
.w-rot { width: 58px; height: 70px; border-right: 1px solid #e3e5e9; }
.wps-body { flex: 1; min-height: 0; display: flex; background: #f6f7fa; border-top: 1px solid #e4e6ea; }
.side { width: 57px; border-right: 3px solid #e2e4e9; display: flex; flex-direction: column; padding-top: 6px; }
.side svg { height: 45px; margin: 0 auto; fill: none; stroke: #3c4254; stroke-width: 1.400; }
.doc { flex: 1; padding: 7px 0 0 399px; display: flex; background: #f5f7fa; }
.sheet { width: 1440px; background: #fff; box-shadow: 0 0 12px rgba(0,0,0,.3), 0 -10px 0 #dcdddf; display: flex; padding: 103px 0 0 40px; }
.sheet-text { margin-left: 48px; width: 300px; }
.uni { font: bold 23.500px/30px "Noto Sans", sans-serif; letter-spacing: -.3px; color: #000; margin: 2px 0 0 20px; }
.city { font: bold 27px/32px "Liberation Serif", serif; color: #1f3864; margin-top: 180px; }
.crest-text { font: bold 8.500px "Noto Sans Devanagari", "Noto Sans", sans-serif; }
.wps-status { height: 35px; flex: none; border-top: 1px solid #dcdfe3; background: #f5f7fa; display: grid; align-items: center; padding-left: 17px; grid-template-columns: 23px 79px 20px 29px 28px 157px 26px 31px 15px 28px 24px 1px; }
.wps-status svg { fill: none; stroke: #2b303f; stroke-width: 1.500; }
.wps-status .dim { stroke: #a9adb5; }
.wps-status .sep { height: 18px; align-self: center; }
.pageno { width: 137px; height: 26px; border: 1px solid #d3d6db; border-radius: 2px; background: #fff; line-height: 25px; text-align: center; }

/* Browser window laid over the reader */
.edge { position: absolute; left: 729px; top: 1px; width: 1181px; height: 1019px; border-radius: 9px 9px 6px 6px; overflow: hidden; background: #202020; display: flex; flex-direction: column; box-shadow: 0 0 0 1px rgba(90,90,90,.55), 0 4px 38px rgba(0,0,0,.5); }
.tabs { height: 50px; flex: none; display: flex; align-items: flex-end; color: #fff; font: 14.300px "Noto Sans", sans-serif; letter-spacing: -.4px; padding-left: 21px; }
.tabact { margin: 0 19px 11px 0; }
.tab { width: 107.600px; height: 39px; padding-left: 14px; display: flex; align-items: center; position: relative; flex: none; white-space: nowrap; }
.tab::before { content: ""; width: 1px; height: 26px; background: #666; position: absolute; left: -1px; top: 7px; }
.tab .fav { margin-right: 12px; }
.tab:nth-child(2) { padding-left: 17px; }
.tab:nth-child(2) .fav { margin-right: 15px; }
.tab:nth-child(3) .fav { margin-right: 15px; }
.tab span { width: 25px; overflow: hidden; margin: -2px 12px 0 0; line-height: 20px; }
.tab .fade { -webkit-mask-image: linear-gradient(90deg, #000 60%, rgba(0,0,0,.2)); mask-image: linear-gradient(90deg, #000 60%, rgba(0,0,0,.2)); }
.tab .grey { color: #c8c8c8; }
.tab .wide { width: 59px; margin-right: 0; }
.tab.student { padding-left: 8px; }
.tab .tx { margin-left: auto; margin-right: 14px; }
.tab.active { background: #3b3b3b; border-radius: 8px 8px 0 0; padding-left: 8px; width: 107px; margin-left: -2px; }
.tab.active::before, .tab.last::before { display: none; }
.tab.active span { width: 29px; }
.tab.last { width: 106px; padding-left: 9px; }
.tab.last .fav { margin-right: 13px; }
.tab.last::after { content: ""; width: 1px; height: 26px; background: #666; position: absolute; right: 0; top: 7px; }
.newtab { margin: 0 0 11px 13px; }
.winctl { margin: 0 22px 18px auto; display: flex; gap: 43.500px; align-items: center; }
.addr { height: 49px; flex: none; background: #3b3b3b; border-bottom: 1px solid #6e6e6e; display: grid; align-items: center; padding: 0 0 1px 25px; grid-template-columns: 55px 45px 841px 55px 54px 63px 17px; }
.pill { width: 817px; height: 38px; background: #2b2b2b; border-radius: 5px; display: flex; align-items: center; padding: 0 17px 0 24px; }
.url { margin: -1px 0 0 20.500px; width: 672px; font: 16.600px "Noto Sans", sans-serif; letter-spacing: -.05px; color: #8f8f8f; white-space: nowrap; }
.url em { color: #fff; }
.addfav { margin-left: auto; }
.view { flex: 1; min-height: 0; display: grid; grid-template-columns: 1161px 20px; grid-template-rows: 904px 16px; }
.page { background: #fff; overflow: hidden; padding-left: 6px; color: #000; font: 15px "Liberation Sans", Arial, sans-serif; }
.guide { width: 1200px; height: 620px; border-left: 1px solid #808080; border-bottom: 1px solid #808080; }
.abstract { margin-left: 204px; width: 890px; height: 36px; border: 1px solid #a9a9a9; border-top: 0; border-radius: 0 0 5px 5px; padding-left: 7px; display: flex; justify-content: space-between; align-items: flex-end; overflow: hidden; color: #555; font-size: 17.500px; line-height: 21px; white-space: nowrap; }
.mini { width: 22px; height: 35px; background: #f0f0f0; display: flex; flex-direction: column; align-items: center; justify-content: space-between; flex: none; }
.corner { width: 22px; height: 22px; background: #dcdcdc; display: grid; place-items: end; padding: 0 3px 1px 0; }
.note { margin-left: 204px; line-height: 36px; font-size: 17.500px; white-space: nowrap; }
.has { display: flex; height: 38px; align-items: center; padding-left: 16.500px; }
.has b { margin-top: -2px; }
.has b:first-child { width: 161px; }
.has .c { width: 35.500px; }
.has span { margin: -1px 10px 0 5.500px; }
.radio { width: 15px; height: 15px; border: 1px solid #767676; border-radius: 50%; margin-top: 3px; background: #fff; }
.radio.on { background: #767676; background-clip: content-box; padding: 2px; }
h2 { font-weight: 400; font-size: 21.900px; line-height: 41px; height: 40px; color: #1f3a5f; padding-left: 19.500px; }
.form { padding-top: 40px; margin-left: 19.500px; display: grid; grid-template-columns: 137.500px 26px 431px 101px 26px 260px; grid-template-rows: 63px 61px 38px 32px 63px 112px; align-items: center; }
label { font-weight: 700; line-height: 28px; font-size: 15px; white-space: nowrap; margin-top: -2px; }
s { color: #f00; font-weight: 400; }
.c { font-weight: 400; padding-left: 1.500px; font-size: 16px; margin-top: -1px; }
input { height: 33px; border: 1px solid #a9a9a9; border-radius: 4px; box-shadow: inset 0 1px 2px rgba(0,0,0,.1); font: 15px "Liberation Sans", Arial, sans-serif; color: #555; padding: 0 6px 1px; background: #fff; display: block; margin: 0; }
input:disabled { border-color: #ddd; color: #b4b4b4; background: #fdfdfd; }
.w253 { width: 253px; }
.w115 { width: 115px; }
.w125 { width: 125px; }
.w43 { width: 43px; }
.w205 { width: 205px; }
.phone, .mobile { display: flex; align-items: center; gap: 4px; }
.phone input { padding-bottom: 2px; }
.phone span { width: 5px; margin-top: -2px; }
.ex { grid-column: 6; font-size: 15px; white-space: nowrap; }
.area { align-self: start; padding-top: 3px; }
.area input { height: 32px; }
.al { align-self: start; margin-top: 1px; line-height: 28px; }
.address { grid-column: 3 / 7; align-self: start; width: 890px; height: 110px; margin-top: 2px; border: 1px solid #a9a9a9; border-radius: 4px; box-shadow: inset 0 1px 2px rgba(0,0,0,.1); display: flex; align-items: flex-end; justify-content: flex-end; padding: 2px 3px; }
.team { margin: 45px 0 0; border: 1px solid #808080; width: 1200px; height: 400px; padding: 0 0 0 13px; }
.team legend { line-height: 30px; font-size: 25.500px; color: #17365d; padding: 0 3px; white-space: nowrap; }
.enrol { display: flex; align-items: center; padding: 34px 0 0 3px; }
.enrol label { width: 132px; }
.enrol .c { width: 25px; }
.enrol input { width: 202px; }
.btns { display: flex; gap: 4px; margin: 4px 0 0 473px; }
.btns button { width: 105px; height: 34px; border: 0; border-radius: 4px; background: #0c62a6; color: #fff; font: 17.700px/30px "Liberation Sans", Arial, sans-serif; padding: 0 0 3px; }
.thead, .trow { margin-left: 4px; width: 1152px; display: grid; grid-template-columns: 69px 138px 276px 231px 104px 253px 81px; }
.thead { margin-top: 46px; height: 54px; border-top: 1px solid #b9cbdb; border-bottom: 2px solid #cfdfec; background: #0c62a6; color: #fff; font-weight: 700; font-size: 15px; line-height: 52px; text-align: center; }
.thead div { border-left: 1px solid #8fb4d6; }
.trow { height: 30px; background: #f8f8f8; }
.trow i { border-left: 1px solid #c8c8c8; }
.vbar { background: #f0f0f0; display: flex; flex-direction: column; align-items: center; padding: 9px 0; }
.vthumb { width: 17px; height: 271px; background: #c1c1c1; margin: 432px 0 auto; }
.tri { border: 4.500px solid transparent; width: 0; height: 0; }
.tri.up { border-bottom: 5px solid #505050; border-top: 0; }
.tri.down { border-top: 5px solid #505050; border-bottom: 0; }
.tri.left { border-right: 5px solid #a3a3a3; border-left: 0; }
.tri.right { border-left: 5px solid #505050; border-right: 0; }
.hbar { background: #f0f0f0; display: flex; align-items: center; padding: 2px 8px 0; }
.hthumb { width: 1083px; height: 14px; background: #c1c1c1; margin: 0 auto 0 8px; }
.cornerbox { background: #dcdcdc; }

/* Taskbar */
.taskbar { position: relative; z-index: 2; height: 60px; flex: none; background: #212121; border-top: 1px solid #484848; color: #fff; display: flex; align-items: center; }
.weather { width: 633px; padding-left: 27px; display: flex; align-items: center; gap: 8px; }
.weather p, .tray p { font-size: 14px; line-height: 20px; margin-top: -2px; }
.weather span { color: #c5c5c5; letter-spacing: .1px; }
.apps { display: flex; height: 49px; gap: 7.100px; }
.apps div { width: 48px; height: 49px; display: grid; place-items: center; position: relative; }
.apps .cur { background: #2e2e2e; border: 1px solid #363636; border-radius: 5px; }
.apps u { position: absolute; bottom: 1px; left: 20px; width: 8px; height: 4px; border-radius: 2px; background: #9b9b9b; }
.apps .cur u { left: 14px; width: 19px; background: #4cc2ff; bottom: 0; }
.badge { position: absolute; top: 4px; font-size: 13px; line-height: 20px; height: 20px; border-radius: 10px; text-align: center; }
.blue { background: #4cc2ff; color: #111; width: 34px; left: 17px; }
.red { background: #fb0007; color: #fff; width: 20px; left: 25px; font-size: 16px; }
.tray { margin-left: auto; display: flex; align-items: center; padding-right: 23px; }
.tray svg { margin-right: 12px; }
.tray svg:nth-child(2) { margin-right: 14px; }
.tray svg:nth-child(3), .tray svg:nth-child(4) { margin-right: 10px; }
.tray p { width: 86px; text-align: right; margin-right: 13px; }
.tray svg:nth-child(5) { margin-right: 0; }
.tray svg { position: static; }
.count { width: 22px; height: 22px; border-radius: 50%; background: #4cc2ff; color: #08314a; font-size: 11px; line-height: 21px; text-align: center; }
```
